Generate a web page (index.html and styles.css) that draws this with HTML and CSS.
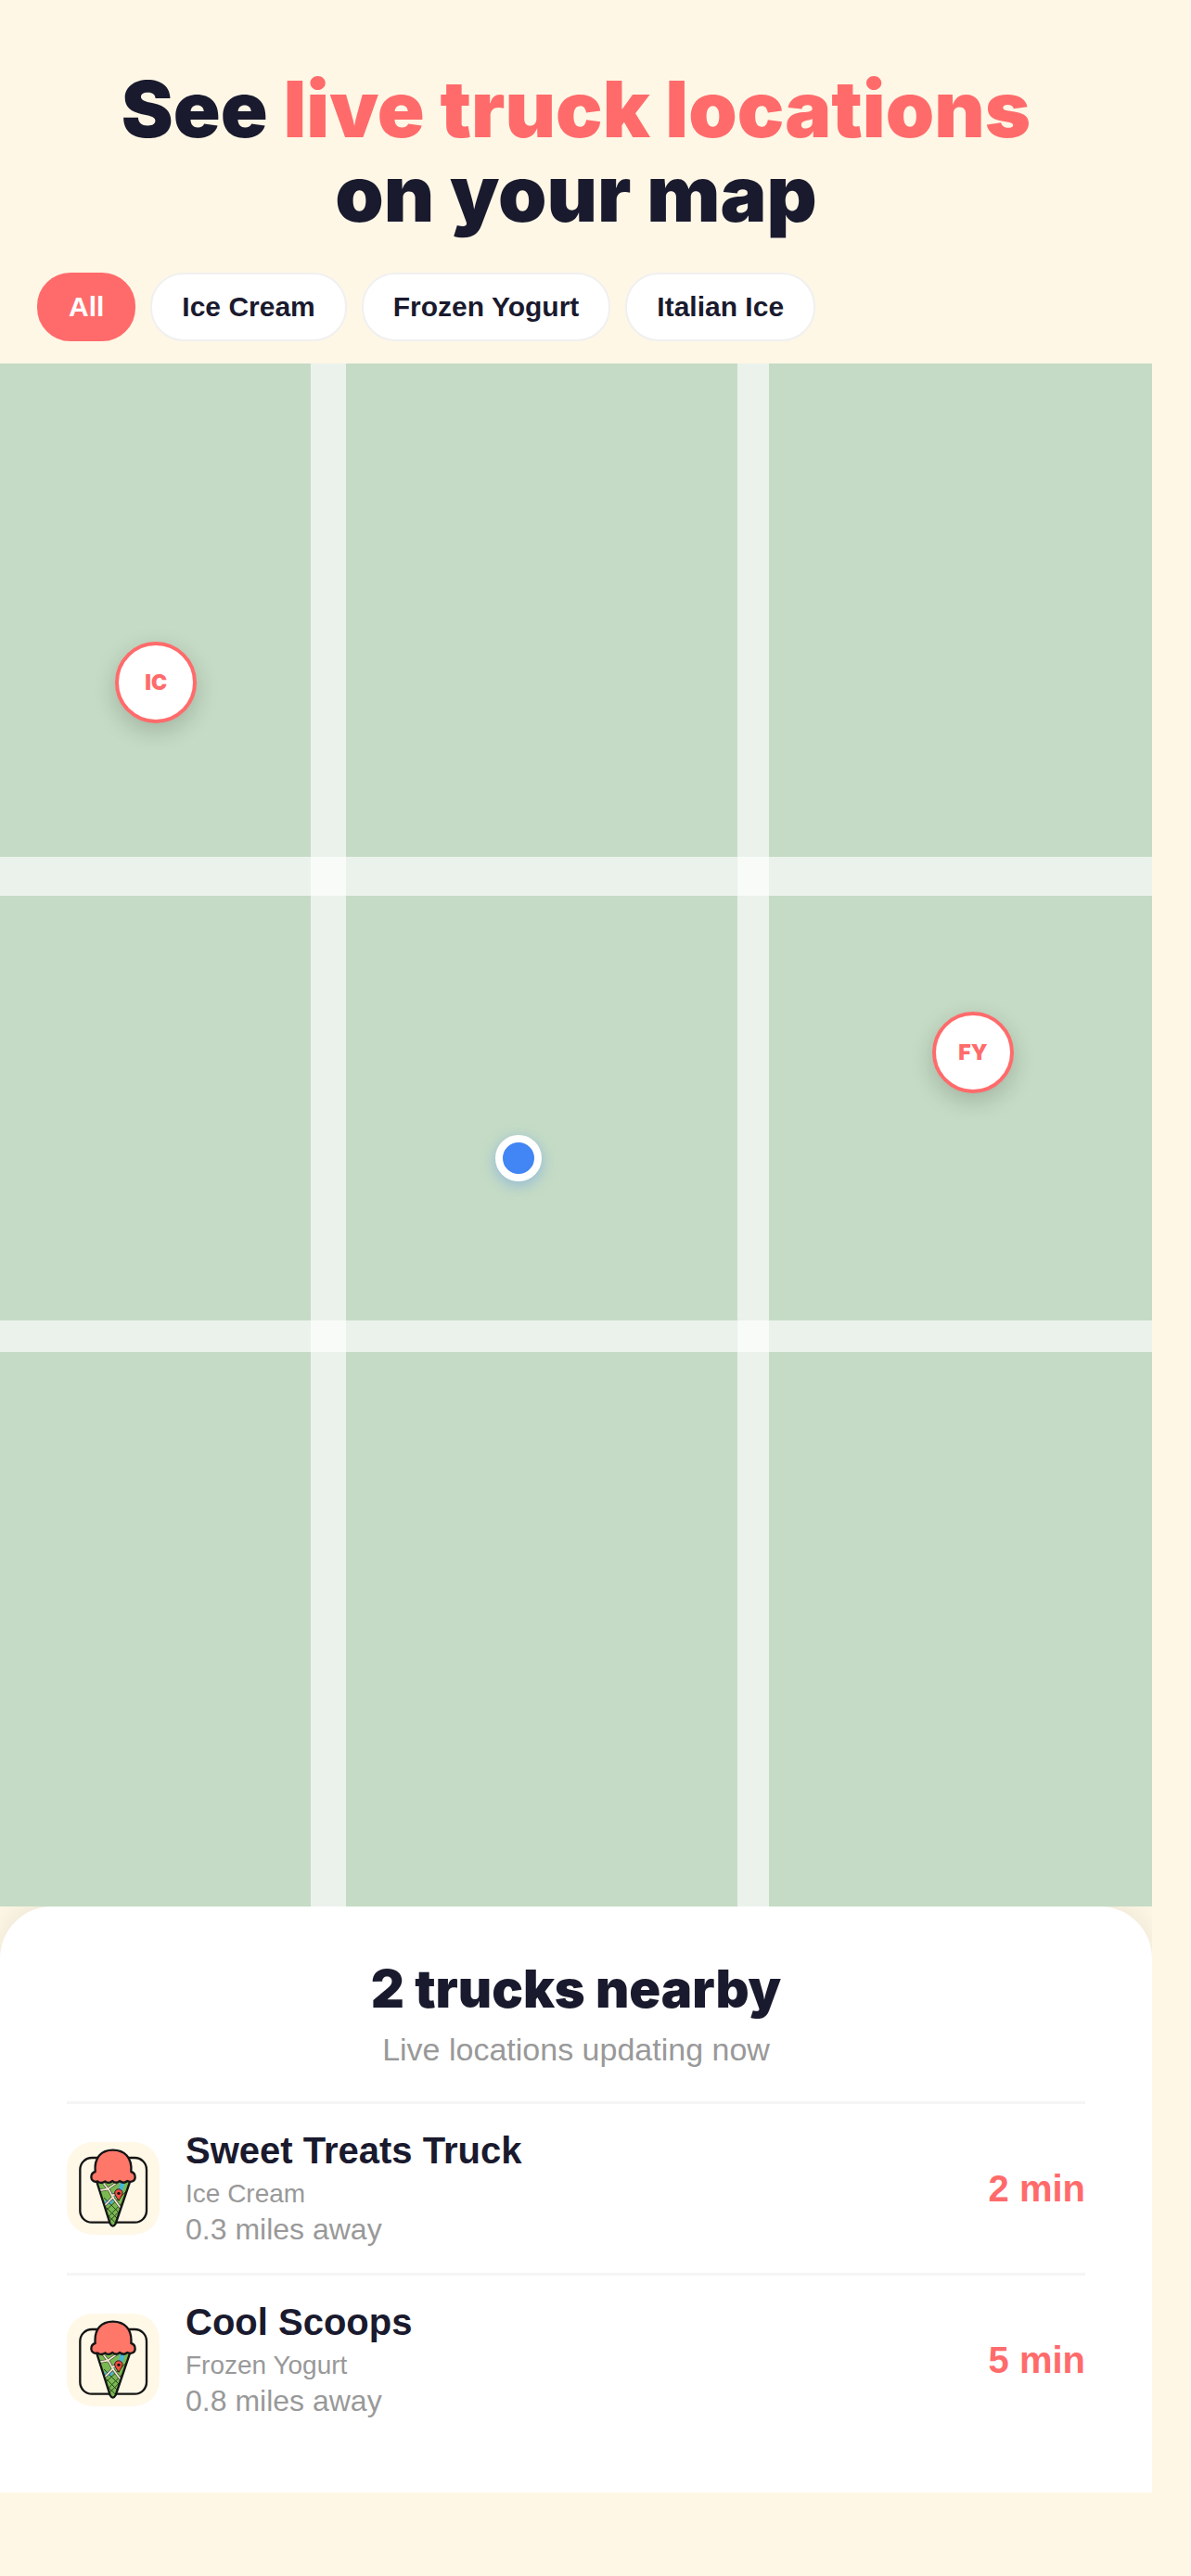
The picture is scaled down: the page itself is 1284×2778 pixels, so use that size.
FILE: index.html
```html
<!DOCTYPE html>
<html lang="en">
<head>
  <meta charset="UTF-8" />
  <meta name="viewport" content="width=device-width, initial-scale=1.0" />
  <title>Live truck map</title>
  <link rel="stylesheet" href="styles.css">
</head>
<body>

<!-- shared cone logo -->
<svg class="sprite" aria-hidden="true">
  <defs>
    <clipPath id="cone-clip">
      <path d="M95 124 H206 L158 264 Q149 276 140 264 Z" />
    </clipPath>
    <symbol id="cone" viewBox="0 0 300 300">
      <rect x="43" y="51" width="215" height="209" rx="38" fill="#fff8e7" stroke="#151515" stroke-width="7" />
      <g clip-path="url(#cone-clip)">
        <rect x="90" y="120" width="120" height="160" fill="#7ab851" />
        <path d="M174 124 L190 124 L180 160 L160 170 L146 200 L112 206 L124 190 L142 184 L156 156 L168 150 Z" fill="#45b5d9" />
        <g fill="none" stroke="#27451f" stroke-width="3">
          <path d="M120 180 L176 236 M128 212 L164 248 M128 232 L156 260 M196 156 L120 228 M190 186 L130 246 M178 216 L134 260" />
        </g>
        <g fill="none" stroke="#3b4930" stroke-width="9">
          <path d="M100 158 L132 152 L164 130 M116 130 L138 158 L148 178 L176 216 M152 176 L116 212 M146 172 L166 168" />
        </g>
        <g fill="none" stroke="#f3e7d2" stroke-width="5">
          <path d="M100 158 L132 152 L164 130 M116 130 L138 158 L148 178 L176 216 M152 176 L116 212 M146 172 L166 168" />
        </g>
      </g>
      <path d="M96 126 L140 264 Q149 280 158 264 L205 126" fill="none" stroke="#151515" stroke-width="7" stroke-linejoin="round" />
      <path d="M92 96 C88 50 112 26 149 26 C186 26 212 50 208 96 C216 98 221 104 221 114 C221 126 208 132 196 126 C188 133 178 132 171 126 C165 133 154 133 148 126 C140 133 130 133 124 127 C114 134 104 133 100 127 C90 131 79 125 79 114 C79 104 84 98 92 96 Z" fill="#ff7769" stroke="#151515" stroke-width="7" stroke-linejoin="round" />
      <path d="M168 190 C160 176 155 172 155 165 A12 12 0 0 1 180 165 C180 172 175 176 168 190 Z" fill="#f04d3f" stroke="#3a1512" stroke-width="3" />
      <circle cx="168" cy="166" r="5" fill="#151515" />
    </symbol>
  </defs>
</svg>

<main class="app">
  <header class="header">
    <h1>See <span class="accent">live truck locations</span><br>on your map</h1>
  </header>

  <div class="filters">
    <button type="button" class="filter active">All</button>
    <button type="button" class="filter">Ice Cream</button>
    <button type="button" class="filter">Frozen Yogurt</button>
    <button type="button" class="filter">Italian Ice</button>
  </div>

  <section class="map">
    <div class="road road-h road-h1"></div>
    <div class="road road-h road-h2"></div>
    <div class="road road-v road-v1"></div>
    <div class="road road-v road-v2"></div>
    <div class="pin pin-ic">IC</div>
    <div class="pin pin-fy">FY</div>
    <div class="me"></div>
  </section>

  <section class="sheet">
    <h2>2 trucks nearby</h2>
    <p class="subtitle">Live locations updating now</p>

    <div class="truck">
      <svg class="truck-icon"><use href="#cone" /></svg>
      <div class="truck-info">
        <h3>Sweet Treats Truck</h3>
        <p class="truck-type">Ice Cream</p>
        <p class="truck-distance">0.3 miles away</p>
      </div>
      <span class="truck-eta">2 min</span>
    </div>

    <div class="truck">
      <svg class="truck-icon"><use href="#cone" /></svg>
      <div class="truck-info">
        <h3>Cool Scoops</h3>
        <p class="truck-type">Frozen Yogurt</p>
        <p class="truck-distance">0.8 miles away</p>
      </div>
      <span class="truck-eta">5 min</span>
    </div>
  </section>
</main>

</body>
</html>
```
FILE: styles.css
```css
* {
  box-sizing: border-box;
  margin: 0;
  padding: 0;
}
body {
  font-family: "Liberation Sans", Arial, sans-serif;
  background: #fff7e6;
  color: #1a1a2e;
  padding-right: 42px;
}
.sprite {
  position: absolute;
  width: 0;
  height: 0;
}
.app {
  overflow: hidden;
}
.header {
  padding: 72px 40px 40px;
  text-align: center;
}
h1, h2, .pin {
  font-family: Inter, "Arial Black", sans-serif;
  font-weight: 900;
}
h1 {
  font-size: 84px;
  line-height: 91px;
}
.accent {
  color: #ff6b6b;
}

/* filters */
.filters {
  display: flex;
  gap: 16px;
  padding: 0 40px 24px;
}
.filter {
  font-family: inherit;
  font-size: 30px;
  font-weight: 700;
  line-height: 34px;
  color: #1a1a2e;
  background: #fff;
  border: 2px solid #f0f0f0;
  border-radius: 36px;
  padding: 18px 32px;
}
.filter.active {
  color: #fff;
  background: #ff6b6b;
  border-color: #ff6b6b;
}

/* map */
.map {
  position: relative;
  z-index: 1;
  height: 1664px;
  background: #c5dbc5;
  overflow: hidden;
}
.road {
  position: absolute;
  background: rgba(255,255,255,0.65);
}
.road-h {
  left: 0;
  right: 0;
}
.road-v {
  top: 0;
  bottom: 0;
}
.road-h1 {
  top: 32%;
  height: 42px;
}
.road-h2 {
  top: 62%;
  height: 34px;
}
.road-v1 {
  left: 27%;
  width: 38px;
}
.road-v2 {
  left: 64%;
  width: 34px;
}
.pin {
  position: absolute;
  display: flex;
  align-items: center;
  justify-content: center;
  width: 88px;
  height: 88px;
  border-radius: 50%;
  border: 4px solid #ff6b6b;
  background: #fff;
  color: #ff6b6b;
  font-size: 23px;
  box-shadow: 0 8px 24px rgba(0,0,0,0.18);
}
.pin-ic {
  top: 18%;
  left: 10%;
}
.pin-fy {
  top: 42%;
  right: 12%;
}
.me {
  position: absolute;
  top: 50%;
  left: 43%;
  width: 50px;
  height: 50px;
  border-radius: 50%;
  border: 8px solid #fff;
  background: #4285f4;
  box-shadow: 0 4px 16px rgba(66,133,244,0.4);
}

/* bottom sheet */
.sheet {
  background: #fff;
  border-radius: 56px 56px 0 0;
  padding: 53px 72px 52px;
  box-shadow: 0 -4px 30px rgba(0,0,0,0.08);
}
h2 {
  font-size: 56px;
  line-height: 73px;
  text-align: center;
}
.subtitle {
  margin: 9px 0 36px;
  font-size: 34px;
  line-height: 39px;
  text-align: center;
  color: #999;
}
.truck {
  display: flex;
  align-items: center;
  gap: 28px;
  padding: 28px 0;
  border-top: 3px solid #f5f5f5;
}
.truck-icon {
  width: 100px;
  height: 100px;
  border-radius: 28px;
  background: #fff8e7;
}
.truck-info {
  flex: 1;
}
h3 {
  font-size: 40px;
  line-height: 44px;
}
.truck-type {
  margin: 9px 0 4px;
  font-size: 28px;
  line-height: 32px;
  color: #999;
}
.truck-distance {
  font-size: 32px;
  line-height: 37px;
  color: #999;
}
.truck-eta {
  font-size: 40px;
  font-weight: 700;
  color: #ff6b6b;
}
```
